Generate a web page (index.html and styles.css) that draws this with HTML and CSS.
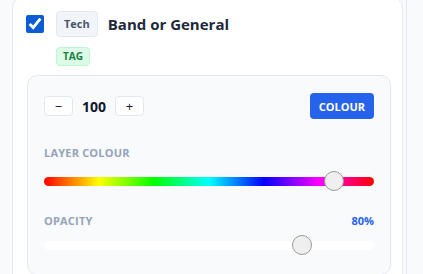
FILE: index.html
```html
<!DOCTYPE html>
<html lang="en">
<head>
<meta charset="utf-8">
<title>Layer</title>
<link rel="stylesheet" href="styles.css">
</head>
<body>
<div class="column">
  <div class="card">
    <div class="header">
      <input type="checkbox" class="check" checked>
      <div class="head-main">
        <div class="title-row">
          <span class="badge-tech">Tech</span>
          <span class="title">Band or General</span>
        </div>
        <div class="tag-row"><span class="badge-tag">TAG</span></div>
      </div>
    </div>
    <div class="panel">
      <div class="top-row">
        <div class="stepper">
          <button class="step-btn">&minus;</button>
          <span class="step-val">100</span>
          <button class="step-btn">+</button>
        </div>
        <button class="colour-btn">COLOUR</button>
      </div>
      <div class="field field-colour">
        <div class="label">LAYER COLOUR</div>
        <input type="range" class="range range-hue" min="0" max="360" value="325">
      </div>
      <div class="field field-opacity">
        <div class="label-row">
          <span class="label">OPACITY</span>
          <span class="value">80%</span>
        </div>
        <input type="range" class="range range-opacity" min="0" max="100" value="80">
      </div>
    </div>
  </div>
</div>
</body>
</html>
```

FILE: styles.css
```css
* { box-sizing: border-box; }
html, body { margin: 0; padding: 0; }
body {
  background: #f8fafc;
  font-family: "Open Sans", "Liberation Sans", sans-serif;
  height: 274px;
  overflow: hidden;
}
.column {
  width: 407px;
  height: 274px;
  overflow: hidden;
  border-right: 1px solid #e2e8f0;
  padding-left: 12px;
  padding-right: 3px;
}
.card {
  margin-top: -4px;
  background: #fff;
  border: 1px solid #e2e8f0;
  border-radius: 12px;
  padding: 14px 11px 14px 14px;
  height: 290px;
}
.header {
  display: flex;
  align-items: flex-start;
  gap: 12px;
}
.check {
  margin: 4px 0 0 -1px;
  width: 18px;
  height: 18px;
  accent-color: #0b5cd5;
}
.head-main {
  display: flex;
  flex-direction: column;
  gap: 10px;
}
.title-row {
  display: flex;
  align-items: center;
  gap: 10px;
}
.tag-row {
  display: flex;
}
.badge-tech {
  display: inline-block;
  font-size: 11px;
  line-height: 16px;
  font-weight: 700;
  color: #475569;
  background: #f1f5f9;
  border: 1px solid #e2e8f0;
  border-radius: 4px;
  padding: 4px 7px;
}
.title {
  font-size: 15px;
  font-weight: 700;
  color: #1e293b;
}
.badge-tag {
  display: inline-block;
  font-size: 10px;
  line-height: 15px;
  font-weight: 700;
  color: #15803d;
  background: #dcfce7;
  border: 1px solid #bbf7d0;
  border-radius: 4px;
  padding: 1px 6px;
}
.panel {
  margin-top: 9px;
  background: #f8fafc;
  border: 1px solid #e2e8f0;
  border-radius: 10px;
  padding: 17px 16px 19px 16px;
}
.top-row {
  display: flex;
  justify-content: space-between;
  align-items: center;
  height: 26px;
}
.stepper {
  display: flex;
  align-items: center;
}
.step-btn {
  width: 29px;
  height: 20px;
  padding: 0;
  background: #fff;
  border: 1px solid #e2e8f0;
  border-radius: 4px;
  font-family: "Open Sans", sans-serif;
  font-size: 13px;
  line-height: 18px;
  color: #0f172a;
}
.step-val {
  width: 42px;
  text-align: center;
  font-size: 14px;
  font-weight: 700;
  color: #0f172a;
}
.colour-btn {
  height: 26px;
  padding: 0 9px;
  background: #2563eb;
  color: #fff;
  border: none;
  border-radius: 4px;
  font-family: "Open Sans", sans-serif;
  font-size: 11px;
  font-weight: 700;
}
.label {
  font-size: 11px;
  line-height: 14px;
  font-weight: 700;
  color: #94a3b8;
  letter-spacing: 0.2px;
}
.field-colour { margin-top: 27px; }
.field-colour .range { margin-top: 11px; }
.field-opacity { margin-top: 23px; }
.field-opacity .range { margin-top: 7px; }
.label-row {
  display: flex;
  justify-content: space-between;
  align-items: center;
  height: 14px;
}
.value {
  font-size: 11px;
  line-height: 14px;
  font-weight: 700;
  color: #2563eb;
}
.range {
  -webkit-appearance: none;
  appearance: none;
  display: block;
  width: 100%;
  height: 20px;
  margin: 0;
  background: transparent;
}
.range::-webkit-slider-runnable-track {
  height: 9px;
  border-radius: 5px;
}
.range-hue::-webkit-slider-runnable-track {
  background: linear-gradient(to right, #f00, #ff0, #0f0, #0ff, #00f, #f0f, #f00);
}
.range-opacity::-webkit-slider-runnable-track {
  background: #fff;
}
.range::-webkit-slider-thumb {
  -webkit-appearance: none;
  appearance: none;
  width: 20px;
  height: 20px;
  border-radius: 50%;
  background: #efefef;
  border: 1px solid #9a9a9a;
  margin-top: -5.5px;
}
```
